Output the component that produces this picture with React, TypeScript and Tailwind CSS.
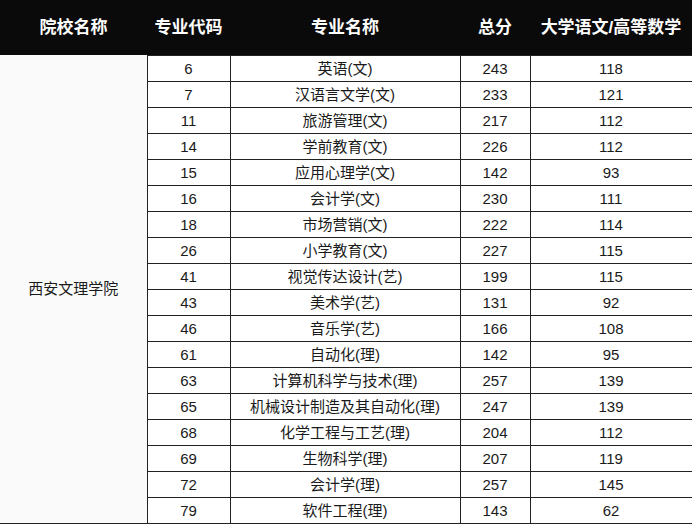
const rows: [string, string, string, string][] = [
  ["6", "英语(文)", "243", "118"],
  ["7", "汉语言文学(文)", "233", "121"],
  ["11", "旅游管理(文)", "217", "112"],
  ["14", "学前教育(文)", "226", "112"],
  ["15", "应用心理学(文)", "142", "93"],
  ["16", "会计学(文)", "230", "111"],
  ["18", "市场营销(文)", "222", "114"],
  ["26", "小学教育(文)", "227", "115"],
  ["41", "视觉传达设计(艺)", "199", "115"],
  ["43", "美术学(艺)", "131", "92"],
  ["46", "音乐学(艺)", "166", "108"],
  ["61", "自动化(理)", "142", "95"],
  ["63", "计算机科学与技术(理)", "257", "139"],
  ["65", "机械设计制造及其自动化(理)", "247", "139"],
  ["68", "化学工程与工艺(理)", "204", "112"],
  ["69", "生物科学(理)", "207", "119"],
  ["72", "会计学(理)", "257", "145"],
  ["79", "软件工程(理)", "143", "62"],
];

const font = { fontFamily: '"Liberation Sans", "Noto Sans CJK SC", sans-serif' };

const App = () => {
  return (
    <div className="w-[692px] h-[524px] bg-white overflow-hidden" style={font}>
      <table className="w-[692px] border-collapse table-fixed text-[15px] text-[#1a1a1a]">
        <colgroup>
          <col className="w-[147px]" />
          <col className="w-[83px]" />
          <col className="w-[230px]" />
          <col className="w-[70px]" />
          <col className="w-[162px]" />
        </colgroup>
        <thead>
          <tr className="h-[55px] bg-[#0a0a0a] text-white text-[17px] font-bold">
            <th className="font-bold">院校名称</th>
            <th className="font-bold">专业代码</th>
            <th className="font-bold">专业名称</th>
            <th className="font-bold">总分</th>
            <th className="font-bold whitespace-nowrap">大学语文/高等数学</th>
          </tr>
        </thead>
        <tbody>
          {rows.map((r, i) => (
            <tr key={r[0]} className="h-[26px]">
              {i === 0 && (
                <td
                  rowSpan={rows.length}
                  className="bg-[#fafafa] border-b border-[#222] text-center p-0 leading-none"
                >
                  西安文理学院
                </td>
              )}
              <td className="border border-[#222] text-center p-0 leading-none">{r[0]}</td>
              <td className="border border-[#222] text-center p-0 leading-none">{r[1]}</td>
              <td className="border border-[#222] text-center p-0 leading-none">{r[2]}</td>
              <td className="border border-[#222] text-center p-0 leading-none">{r[3]}</td>
            </tr>
          ))}
        </tbody>
      </table>
    </div>
  );
};

export default App;
